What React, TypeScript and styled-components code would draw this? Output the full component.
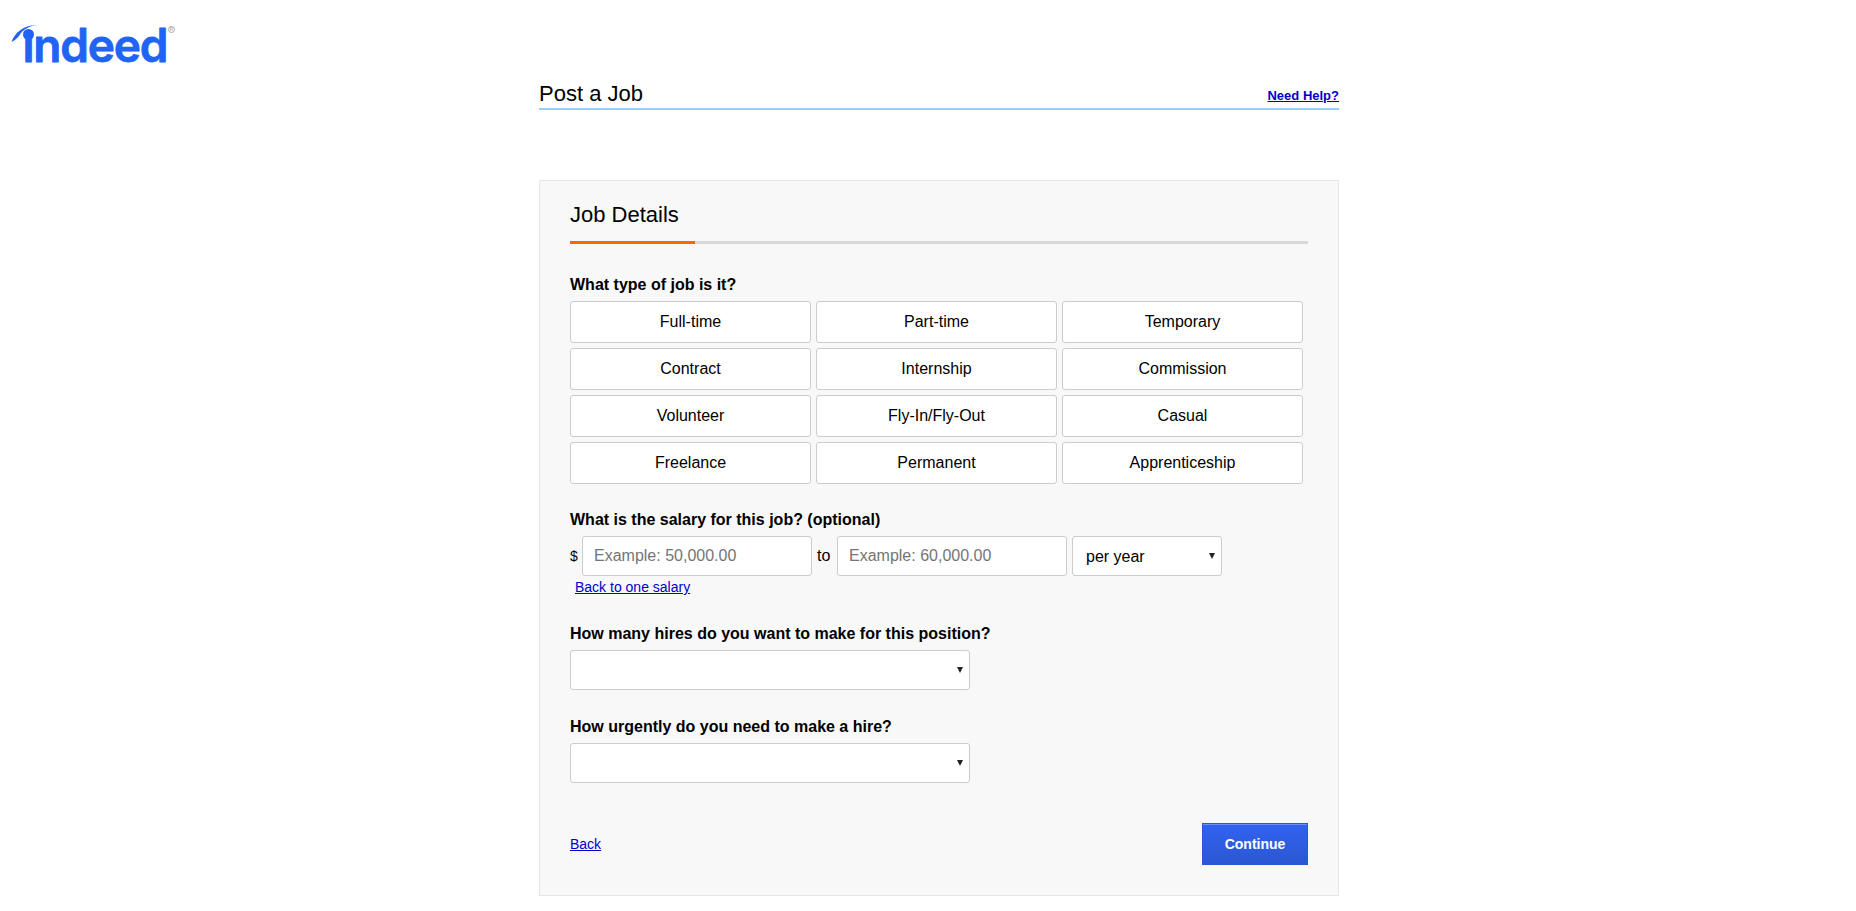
import React from 'react'
import styled, { createGlobalStyle } from 'styled-components'

const jobTypes = [
  'Full-time',
  'Part-time',
  'Temporary',
  'Contract',
  'Internship',
  'Commission',
  'Volunteer',
  'Fly-In/Fly-Out',
  'Casual',
  'Freelance',
  'Permanent',
  'Apprenticeship'
]

const Logo: React.FC = () => (
  <StyledLogo viewBox="0 0 180 78" width="180" height="78" role="img" aria-label="indeed">
    <path d="M11.5 42 C15 32 25 24 39.5 25.5 C35 24.500 24 27 19 36 C16.500 39 14 41 11.500 42 Z" fill="#2164f3" />
    <circle cx="28.500" cy="34.500" r="5.500" fill="#2164f3" />
    <text x="22.500" y="62" fontFamily="Inter, sans-serif" fontWeight="600" fontSize="46" letterSpacing="-1.2" fill="#2164f3" stroke="#2164f3" strokeWidth="0.8" strokeLinejoin="round">ındeed</text>
    <circle cx="171.500" cy="29.500" r="3" fill="none" stroke="#9a9a9a" strokeWidth="0.8" />
    <text x="171.500" y="31.300" textAnchor="middle" fontFamily="Liberation Sans, sans-serif" fontSize="5" fill="#9a9a9a">R</text>
  </StyledLogo>
)

const App: React.FC = () => (
  <>
    <GlobalStyle />
    <StyledHeader>
      <Logo />
    </StyledHeader>
    <StyledColumn>
      <StyledTitleRow>
        <StyledPageTitle>Post a Job</StyledPageTitle>
        <StyledHelpLink href="#">Need Help?</StyledHelpLink>
      </StyledTitleRow>
      <StyledPanel>
        <StyledPanelTitle>Job Details</StyledPanelTitle>
        <StyledProgress>
          <StyledProgressFill $percent={17} />
        </StyledProgress>

        <StyledLabel $top={30}>What type of job is it?</StyledLabel>
        <StyledTypeGrid>
          {jobTypes.map((type) => (
            <StyledTypeButton key={type} type="button">
              {type}
            </StyledTypeButton>
          ))}
        </StyledTypeGrid>

        <StyledLabel $top={25}>What is the salary for this job? (optional)</StyledLabel>
        <StyledSalaryRow>
          <StyledDollar>$</StyledDollar>
          <StyledInput placeholder="Example: 50,000.00" />
          <StyledTo>to</StyledTo>
          <StyledInput placeholder="Example: 60,000.00" />
          <StyledSelectWrap $width={150}>
            <StyledSelect defaultValue="year">
              <option value="year">per year</option>
              <option value="month">per month</option>
              <option value="week">per week</option>
              <option value="hour">per hour</option>
            </StyledSelect>
          </StyledSelectWrap>
        </StyledSalaryRow>
        <StyledSalaryLink href="#">Back to one salary</StyledSalaryLink>

        <StyledLabel $top={28}>How many hires do you want to make for this position?</StyledLabel>
        <StyledSelectWrap $width={400}>
          <StyledSelect defaultValue="">
            <option value=""></option>
          </StyledSelect>
        </StyledSelectWrap>

        <StyledLabel $top={26}>How urgently do you need to make a hire?</StyledLabel>
        <StyledSelectWrap $width={400}>
          <StyledSelect defaultValue="">
            <option value=""></option>
          </StyledSelect>
        </StyledSelectWrap>

        <StyledFooterRow>
          <StyledBackLink href="#">Back</StyledBackLink>
          <StyledContinue type="button">Continue</StyledContinue>
        </StyledFooterRow>
      </StyledPanel>
    </StyledColumn>
  </>
)

const GlobalStyle = createGlobalStyle`
  html, body {
    margin: 0;
    background: #fff;
    color: #000;
    font-family: "Liberation Sans", Arial, sans-serif;
  }
`

const StyledHeader = styled.header`
  height: 78px;
`
const StyledLogo = styled.svg`
  display: block;
`
const StyledColumn = styled.main`
  width: 800px;
  margin-left: 539px;
`
const StyledTitleRow = styled.div`
  display: flex;
  align-items: flex-end;
  justify-content: space-between;
  height: 30px;
  border-bottom: 2px solid #99ccff;
`
const StyledPageTitle = styled.h1`
  margin: 0;
  font-size: 22px;
  font-weight: 400;
  line-height: 28px;
`
const StyledHelpLink = styled.a`
  margin-bottom: 4px;
  font-size: 13px;
  font-weight: 700;
  line-height: 16px;
  color: #0000cc;
`
const StyledPanel = styled.section`
  margin-top: 70px;
  padding: 18px 30px 30px;
  background: #f8f8f8;
  border: 1px solid #e6e6e6;
`
const StyledPanelTitle = styled.h2`
  margin: 0 0 10px;
  font-size: 22px;
  font-weight: 400;
  line-height: 32px;
`
const StyledProgress = styled.div`
  height: 3px;
  background: #d9d9d9;
`
const StyledProgressFill = styled.div<{ $percent: number }>`
  width: ${(p) => p.$percent}%;
  height: 100%;
  background: #f60;
`
const StyledLabel = styled.div<{ $top: number }>`
  margin: ${(p) => p.$top}px 0 6px;
  font-size: 16px;
  font-weight: 700;
  line-height: 21px;
`
const StyledTypeGrid = styled.div`
  display: grid;
  grid-template-columns: repeat(3, 241px);
  grid-auto-rows: 42px;
  gap: 5px;
`
const StyledTypeButton = styled.button`
  padding: 0;
  background: #fff;
  border: 1px solid #ccc;
  border-radius: 3px;
  color: #000;
  font-family: inherit;
  font-size: 16px;
`
const StyledSalaryRow = styled.div`
  display: flex;
  align-items: center;
`
const StyledDollar = styled.span`
  width: 12px;
  font-size: 14px;
`
const StyledTo = styled.span`
  width: 25px;
  padding-left: 5px;
  box-sizing: border-box;
  font-size: 16px;
`
const StyledInput = styled.input`
  box-sizing: border-box;
  width: 230px;
  height: 40px;
  padding: 0 11px;
  background: #fff;
  border: 1px solid #ccc;
  border-radius: 3px;
  font-family: inherit;
  font-size: 16px;

  &::placeholder {
    color: #757575;
    opacity: 1;
  }
`
const StyledSelectWrap = styled.div<{ $width: number }>`
  position: relative;
  width: ${(p) => p.$width}px;
  height: 40px;

  input + & {
    margin-left: 5px;
  }

  &::after {
    content: '';
    position: absolute;
    top: 17px;
    right: 7px;
    border-top: 6px solid #222;
    border-left: 3px solid transparent;
    border-right: 3px solid transparent;
    pointer-events: none;
  }
`
const StyledSelect = styled.select`
  display: block;
  box-sizing: border-box;
  width: 100%;
  height: 100%;
  padding: 0 13px;
  appearance: none;
  background: #fff;
  border: 1px solid #ccc;
  border-radius: 3px;
  color: #000;
  font-family: inherit;
  font-size: 16px;
`
const StyledSalaryLink = styled.a`
  display: block;
  width: max-content;
  margin: 3px 0 0 5px;
  font-size: 14px;
  line-height: 16px;
  color: #0000cc;
`
const StyledFooterRow = styled.div`
  display: flex;
  align-items: center;
  justify-content: space-between;
  margin-top: 40px;
`
const StyledBackLink = styled.a`
  font-size: 14px;
  color: #0000cc;
`
const StyledContinue = styled.button`
  width: 106px;
  height: 42px;
  padding: 0;
  background: linear-gradient(#3163f0, #2c57d2);
  border: 1px solid #2c57d2;
  box-shadow: inset 0 1px 0 #6e90f5;
  color: #fff;
  font-family: inherit;
  font-size: 14px;
  font-weight: 700;
`

export default App
